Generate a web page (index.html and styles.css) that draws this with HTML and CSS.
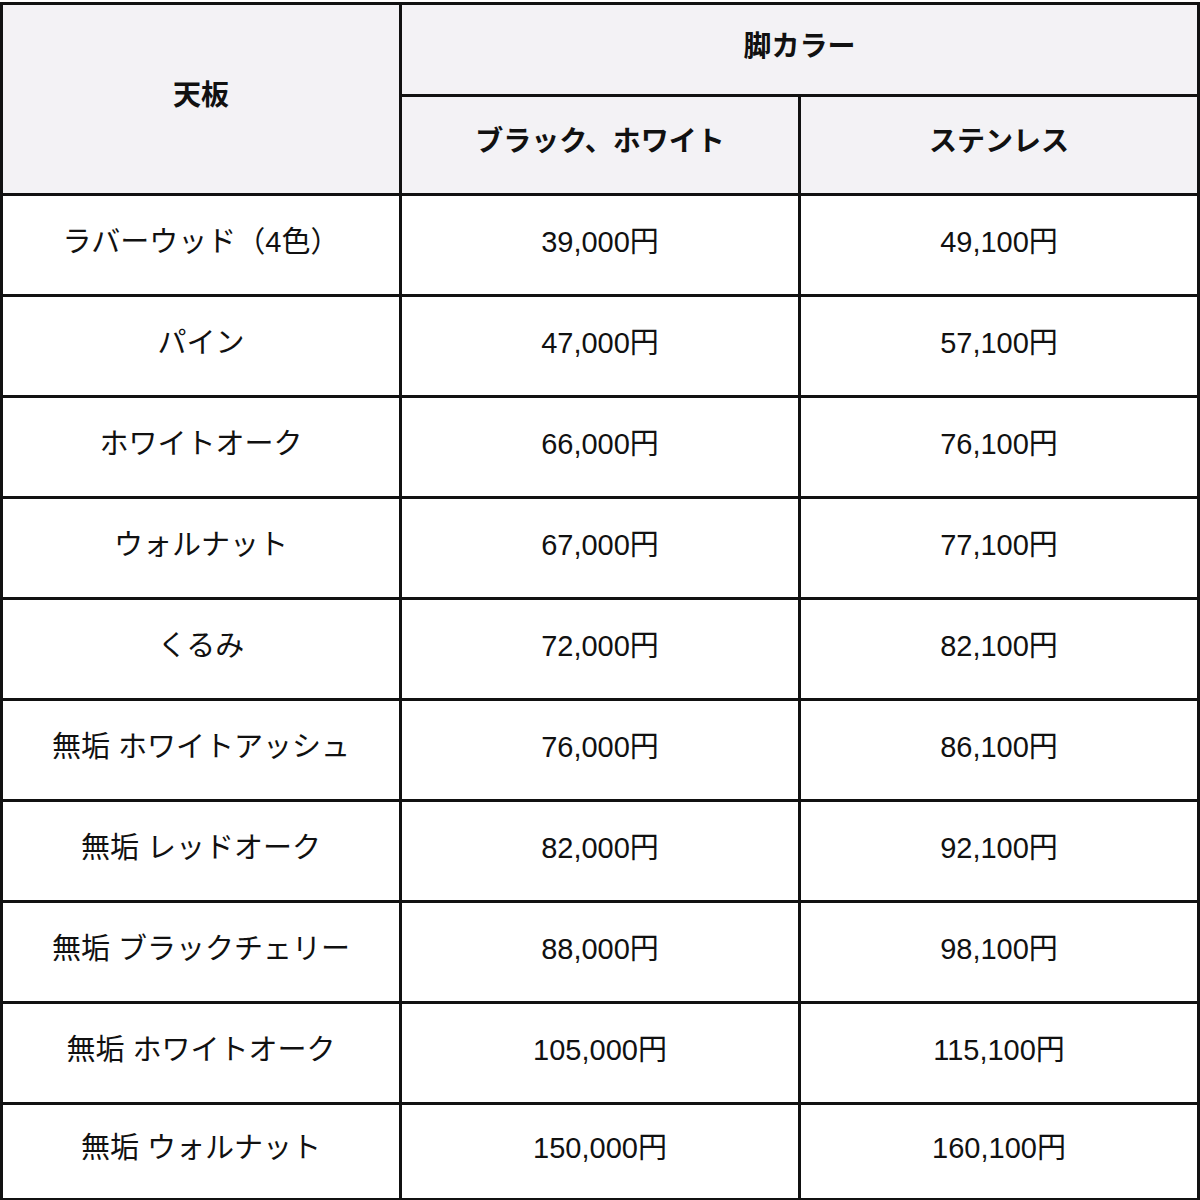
FILE: index.html
```html
<!DOCTYPE html>
<html lang="ja">
<head>
<meta charset="utf-8">
<link rel="stylesheet" href="styles.css">
</head>
<body>
<table class="price-table">
  <colgroup>
    <col class="col">
    <col class="col">
    <col class="col">
  </colgroup>
  <thead>
    <tr class="head-top">
      <th rowspan="2">天板</th>
      <th colspan="2">脚カラー</th>
    </tr>
    <tr class="head-sub">
      <th>ブラック、ホワイト</th>
      <th>ステンレス</th>
    </tr>
  </thead>
  <tbody>
    <tr><td>ラバーウッド（4色）</td><td>39,000円</td><td>49,100円</td></tr>
    <tr><td>パイン</td><td>47,000円</td><td>57,100円</td></tr>
    <tr><td>ホワイトオーク</td><td>66,000円</td><td>76,100円</td></tr>
    <tr><td>ウォルナット</td><td>67,000円</td><td>77,100円</td></tr>
    <tr><td>くるみ</td><td>72,000円</td><td>82,100円</td></tr>
    <tr><td>無垢 ホワイトアッシュ</td><td>76,000円</td><td>86,100円</td></tr>
    <tr><td>無垢 レッドオーク</td><td>82,000円</td><td>92,100円</td></tr>
    <tr><td>無垢 ブラックチェリー</td><td>88,000円</td><td>98,100円</td></tr>
    <tr><td>無垢 ホワイトオーク</td><td>105,000円</td><td>115,100円</td></tr>
    <tr class="last"><td>無垢 ウォルナット</td><td>150,000円</td><td>160,100円</td></tr>
  </tbody>
</table>
</body>
</html>
```
FILE: styles.css
```css
html, body {
  margin: 0;
  padding: 0;
  background: #ffffff;
}
body {
  padding-top: 2px;
  font-family: "Liberation Sans", "Noto Sans CJK JP", sans-serif;
  color: #111111;
}
.price-table {
  width: 1200px;
  border-collapse: collapse;
  table-layout: fixed;
}
.price-table .col {
  width: 33.333%;
}
.price-table th,
.price-table td {
  border: 3px solid #111111;
  text-align: center;
  vertical-align: middle;
  padding: 0 0 6px 0;
  line-height: 1.2;
}
.price-table th {
  background: #f3f2f5;
  font-weight: 700;
  font-size: 28px;
}
.price-table td {
  font-size: 29px;
  font-weight: 400;
}
.head-top { height: 92px; }
.head-sub { height: 99px; }
.price-table tbody tr { height: 101px; }
.price-table tbody tr.last { height: 96px; }
```
